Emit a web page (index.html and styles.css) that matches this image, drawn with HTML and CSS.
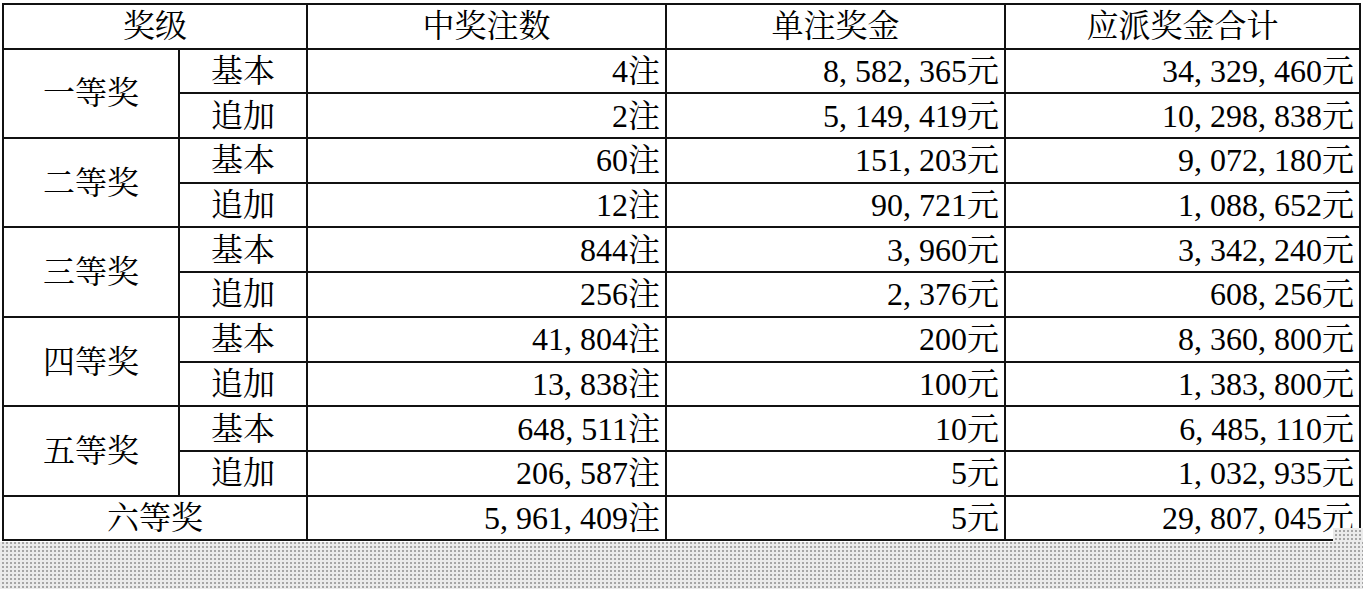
FILE: index.html
```html
<!DOCTYPE html>
<html lang="zh-CN">
<head>
<meta charset="utf-8">
<title>奖级</title>
<link rel="stylesheet" href="styles.css">
</head>
<body>
<div class="sheet">
<table class="prize">
<colgroup>
<col class="c1"><col class="c2"><col class="c3"><col class="c4"><col class="c5">
</colgroup>
<thead>
<tr><th colspan="2">奖级</th><th>中奖注数</th><th>单注奖金</th><th>应派奖金合计</th></tr>
</thead>
<tbody>
<tr><td rowspan="2" class="lvl">一等奖</td><td class="sub">基本</td><td class="num">4注</td><td class="num">8<i>,</i>582<i>,</i>365元</td><td class="num">34<i>,</i>329<i>,</i>460元</td></tr>
<tr><td class="sub">追加</td><td class="num">2注</td><td class="num">5<i>,</i>149<i>,</i>419元</td><td class="num">10<i>,</i>298<i>,</i>838元</td></tr>
<tr><td rowspan="2" class="lvl">二等奖</td><td class="sub">基本</td><td class="num">60注</td><td class="num">151<i>,</i>203元</td><td class="num">9<i>,</i>072<i>,</i>180元</td></tr>
<tr><td class="sub">追加</td><td class="num">12注</td><td class="num">90<i>,</i>721元</td><td class="num">1<i>,</i>088<i>,</i>652元</td></tr>
<tr><td rowspan="2" class="lvl">三等奖</td><td class="sub">基本</td><td class="num">844注</td><td class="num">3<i>,</i>960元</td><td class="num">3<i>,</i>342<i>,</i>240元</td></tr>
<tr><td class="sub">追加</td><td class="num">256注</td><td class="num">2<i>,</i>376元</td><td class="num">608<i>,</i>256元</td></tr>
<tr><td rowspan="2" class="lvl">四等奖</td><td class="sub">基本</td><td class="num">41<i>,</i>804注</td><td class="num">200元</td><td class="num">8<i>,</i>360<i>,</i>800元</td></tr>
<tr><td class="sub">追加</td><td class="num">13<i>,</i>838注</td><td class="num">100元</td><td class="num">1<i>,</i>383<i>,</i>800元</td></tr>
<tr><td rowspan="2" class="lvl">五等奖</td><td class="sub">基本</td><td class="num">648<i>,</i>511注</td><td class="num">10元</td><td class="num">6<i>,</i>485<i>,</i>110元</td></tr>
<tr><td class="sub">追加</td><td class="num">206<i>,</i>587注</td><td class="num">5元</td><td class="num">1<i>,</i>032<i>,</i>935元</td></tr>
<tr><td colspan="2" class="lvl">六等奖</td><td class="num">5<i>,</i>961<i>,</i>409注</td><td class="num">5元</td><td class="num">29<i>,</i>807<i>,</i>045元</td></tr>
</tbody>
</table>
<div class="notch"></div>
</div>
</body>
</html>
```

FILE: styles.css
```css
html, body {
  margin: 0;
  padding: 0;
}
body {
  width: 1363px;
  height: 589px;
  overflow: hidden;
  background-color: #ebebeb;
  background-image: radial-gradient(circle, #a6a6a6 0.8px, transparent 1.1px);
  background-size: 4px 4px;
  background-position: 1px 1px;
}
.sheet {
  position: relative;
  background: #fff;
  height: 542px;
  padding: 3px 0 0 2px;
  box-sizing: border-box;
}
.prize {
  border-collapse: collapse;
  table-layout: fixed;
  width: 1359px;
  font-family: "Liberation Serif", "Noto Serif CJK SC", "Noto Sans CJK SC", serif;
  font-size: 32px;
  color: #000;
}
.c1 { width: 176px; }
.c2 { width: 128px; }
.c3 { width: 359px; }
.c4 { width: 339px; }
.c5 { width: 355px; }
.prize th, .prize td {
  border: 2px solid #111;
  height: 42.7px;
  padding: 0;
  line-height: 38px;
  vertical-align: middle;
  white-space: nowrap;
  overflow: hidden;
}
.prize th {
  font-weight: normal;
  text-align: center;
}
.prize td.lvl, .prize td.sub {
  text-align: center;
}
.prize td.num {
  text-align: right;
  padding-right: 5px;
}
.prize i {
  font-style: normal;
  display: inline-block;
  width: 16px;
  text-align: left;
}
.notch {
  position: absolute;
  right: 0;
  bottom: 0;
  width: 30px;
  height: 14px;
  background-color: #ebebeb;
  background-image: radial-gradient(circle, #a6a6a6 0.8px, transparent 1.1px);
  background-size: 4px 4px;
  background-position: 1px 1px;
}
```
